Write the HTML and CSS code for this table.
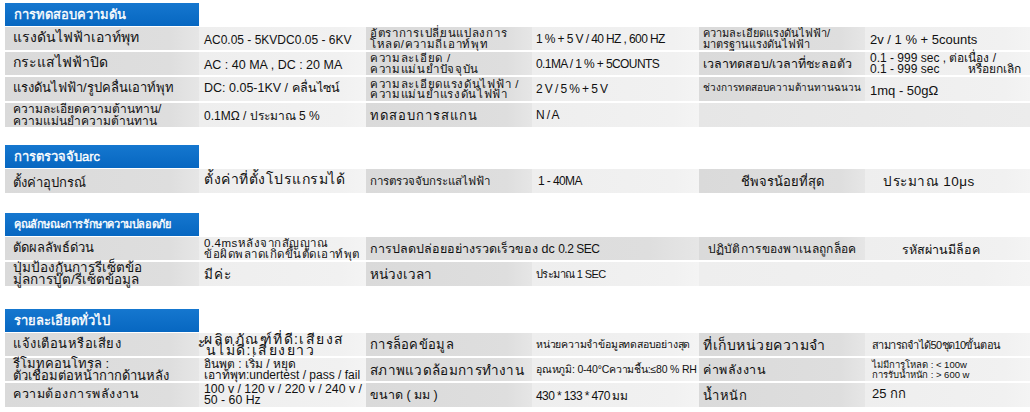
FILE: index.html
```html
<!DOCTYPE html>
<html lang="th">
<head>
<meta charset="utf-8">
<title>Specs</title>
<link rel="stylesheet" href="styles.css">
</head>
<body>
<section class="spec s1">
  <div class="head">การทดสอบความดัน</div>
  <div class="grid">
    <div class="c g k f14">แรงดันไฟฟ้าเอาท์พุท</div>
    <div class="c l v low">AC0.05 - 5KVDC0.05 - 6KV</div>
    <div class="c g t2 sp">อัตราการเปลี่ยนแปลงการ<br>โหลด/ความถี่เอาท์พุท</div>
    <div class="c l n">1 % + 5 V / 40 HZ , 600 HZ</div>
    <div class="c g t2 f11">ความละเอียดแรงดันไฟฟ้า/<br>มาตรฐานแรงดันไฟฟ้า</div>
    <div class="c l v low f13">2v / 1 % + 5counts</div>

    <div class="c g k f14">กระแสไฟฟ้าปิด</div>
    <div class="c l v low f125">AC : 40 MA , DC : 20 MA</div>
    <div class="c g t2 sp">ความละเอียด /<br>ความแม่นยำปัจจุบัน</div>
    <div class="c l n">0.1MA / 1 % + 5COUNTS</div>
    <div class="c g t1 f125">เวลาทดสอบ/เวลาที่ชะลอตัว</div>
    <div class="c l v2 f12"><span>0.1 - 999 sec , ต่อเนื่อง /<br>0.1 - 999 sec<span class="gap">หรือยกเลิก</span></span></div>

    <div class="c g k f13">แรงดันไฟฟ้า/รูปคลื่นเอาท์พุท</div>
    <div class="c l v low f125">DC: 0.05-1KV / คลื่นไซน์</div>
    <div class="c g t2 sp">ความละเอียดแรงดันไฟฟ้า /<br>ความแม่นยำแรงดันไฟฟ้า</div>
    <div class="c l n">2 V / 5 % + 5 V</div>
    <div class="c g t1 f10 top">ช่วงการทดสอบความต้านทานฉนวน</div>
    <div class="c l v low f13">1mq - 50gΩ</div>

    <div class="c g k2 f12">ความละเอียดความต้านทาน/<br>ความแม่นยำความต้านทาน</div>
    <div class="c l v f12">0.1MΩ / ประมาณ 5 %</div>
    <div class="c g t1 f13 ls10">ทดสอบการสแกน</div>
    <div class="c l n">N / A</div>
    <div class="c e span2"></div>
  </div>
</section>

<section class="spec s2">
  <div class="head">การตรวจจับarc</div>
  <div class="grid">
    <div class="c g k f13 top">ตั้งค่าอุปกรณ์</div>
    <div class="c l v f14 ls5 low">ตั้งค่าที่ตั้งโปรแกรมได้</div>
    <div class="c g t1 f115">การตรวจจับกระแสไฟฟ้า</div>
    <div class="c l n p6">1 - 40MA</div>
    <div class="c g t1 f13 center">ชีพจรน้อยที่สุด</div>
    <div class="c l v f135 ls5 p18">ประมาณ 10μs</div>
  </div>
</section>

<section class="spec s3">
  <div class="head hsm">คุณลักษณะการรักษาความปลอดภัย</div>
  <div class="grid">
    <div class="c g k f13">ตัดผลลัพธ์ด่วน</div>
    <div class="c l t2 f115 ls5 p5">0.4msหลังจากสัญญาณ<br>ข้อผิดพลาดเกิดขึ้นตัดเอาท์พุต</div>
    <div class="c g span2 t1 f125">การปลดปล่อยอย่างรวดเร็วของ dc&nbsp;<span class="num">0.2 SEC</span></div>
    <div class="c g t1 f12 ls3 center">ปฏิบัติการของพาเนลถูกล็อค</div>
    <div class="c l v f125 p37 top">รหัสผ่านมีล็อค</div>

    <div class="c g k2 f135">ปุ่มป้องกันการรีเซ็ตข้อ<br>มูลการบู๊ต/รีเซ็ตข้อมูล</div>
    <div class="c l v f135 ls10">มีค่ะ</div>
    <div class="c g t1 f135">หน่วงเวลา</div>
    <div class="c l n f11">ประมาณ 1 SEC</div>
    <div class="c l span2"></div>
  </div>
</section>

<section class="spec s4">
  <div class="head">รายละเอียดทั่วไป</div>
  <div class="grid">
    <div class="c g k f13 ls5">แจ้งเตือนหรือเสียง</div>
    <div class="c l v2 f14 ls15">ผลิตภัณฑ์ที่ดี:เสียงส<br>ั้นไม่ดี:เสียงยาว</div>
    <div class="c g t1 f13 ls3">การล็อคข้อมูล</div>
    <div class="c l n sm">หน่วยความจำข้อมูลทดสอบอย่างสุด</div>
    <div class="c g t1 f14 ls5">ที่เก็บหน่วยความจำ</div>
    <div class="c l n f11 p7">สามารถจำได้50ชุด10ขั้นตอน</div>

    <div class="c g k2 f13">รีโมทคอนโทรล :<br>ตัวเชื่อมต่อหน้ากากด้านหลัง</div>
    <div class="c l v2 f12">อินพุต : เริ่ม / หยุด<br>เอาท์พุท:undertest / pass / fail</div>
    <div class="c g t1 f135 ls3">สภาพแวดล้อมการทำงาน</div>
    <div class="c l n sm">อุณหภูมิ: 0-40°Cความชื้น:≤80 % RH</div>
    <div class="c g t1 f125 ls5">ค่าพลังงาน</div>
    <div class="c l t2 xs p7">ไม่มีการโหลด : &lt; 100w<br>การรับน้ำหนัก : &gt; 600 w</div>

    <div class="c g k f125 ls5">ความต้องการพลังงาน</div>
    <div class="c l v2 f123">100 v / 120 v / 220 v / 240 v /<br>50 - 60 Hz</div>
    <div class="c g t1 f125">ขนาด ( มม )</div>
    <div class="c l n">430 * 133 * 470 มม</div>
    <div class="c g t1 f13 ls5">น้ำหนัก</div>
    <div class="c l v low f13 p7">25 กก</div>
  </div>
</section>
</body>
</html>
```

FILE: styles.css
```css
* { box-sizing: border-box; }
html, body { margin: 0; padding: 0; background: #ffffff; }
body {
  padding: 3px 0 0 5px;
  font-family: "Liberation Sans", Arial, sans-serif;
  color: #111111;
  width: 1030px;
}
.spec { width: 1025px; }
.s2 { margin-top: 18px; }
.s3 { margin-top: 20px; }
.s4 { margin-top: 23px; }
.head {
  width: 194px;
  height: 23px;
  background: linear-gradient(#1577cf, #0767c1);
  color: #ffffff;
  font-size: 13px;
  line-height: 23px;
  padding-left: 9px;
  margin-bottom: 1px;
  white-space: nowrap;
  overflow: hidden;
  -webkit-text-stroke: 0.35px #ffffff;
}
.hsm { font-size: 11px; letter-spacing: -0.4px; }
.grid {
  display: grid;
  grid-template-columns: 194px 167px 166px 167px 166px 165px;
  row-gap: 2px;
}
.s1 .grid { grid-template-rows: 23px 23px 24px 24px; }
.s2 .grid { grid-template-rows: 24px; }
.s3 .grid { grid-template-rows: 23px 24px; }
.s4 .grid { grid-template-rows: 23px 23px 24px; }
.c {
  display: flex;
  align-items: center;
  white-space: nowrap;
  padding-left: 4px;
}
.g { background: linear-gradient(90deg, #dadada, #dedede 85%, #e6e6e6); }
.l { background: linear-gradient(90deg, #eeeeee, #f1f1f1 85%, #f4f4f4); }
.e { background: linear-gradient(90deg, #e6e6e6, #ececec); }
.span2 { grid-column: span 2; }
.k { padding-left: 8px; padding-bottom: 3px; }
.k2 { line-height: 12px; padding-left: 8px; }
.v { font-size: 12px; padding-left: 5px; }
.low { align-items: flex-end; padding-bottom: 3px; }
.top { align-items: flex-start; padding-top: 3px; }
.v2 { font-size: 12px; line-height: 11px; padding-left: 5px; }
.t1 { font-size: 12px; padding-left: 4px; }
.t2 { font-size: 11px; line-height: 10.5px; padding-left: 4px; }
.sp { font-size: 11.5px; letter-spacing: 0.7px; }
.n { font-size: 12px; letter-spacing: -0.6px; padding-left: 4px; }
.num { font-size: 12px; letter-spacing: -0.5px; }
.gap { display: inline-block; margin-left: 29px; }
.sm { font-size: 10.5px; letter-spacing: -0.2px; }
.xs { font-size: 9.5px; line-height: 10px; }
.f10 { font-size: 10px; }
.f11 { font-size: 11px; }
.f115 { font-size: 11.5px; }
.f12 { font-size: 12px; }
.f123 { font-size: 12.3px; }
.f125 { font-size: 12.5px; }
.f13 { font-size: 13px; }
.f135 { font-size: 13.5px; }
.f14 { font-size: 14px; }
.ls3 { letter-spacing: 0.3px; }
.ls5 { letter-spacing: 0.5px; }
.ls10 { letter-spacing: 1px; }
.ls15 { letter-spacing: 1.5px; }
.center { justify-content: center; padding-left: 0; }
.p5 { padding-left: 5px; }
.p6 { padding-left: 6px; }
.p7 { padding-left: 7px; }
.p18 { padding-left: 18px; }
.p37 { padding-left: 37px; }
```
